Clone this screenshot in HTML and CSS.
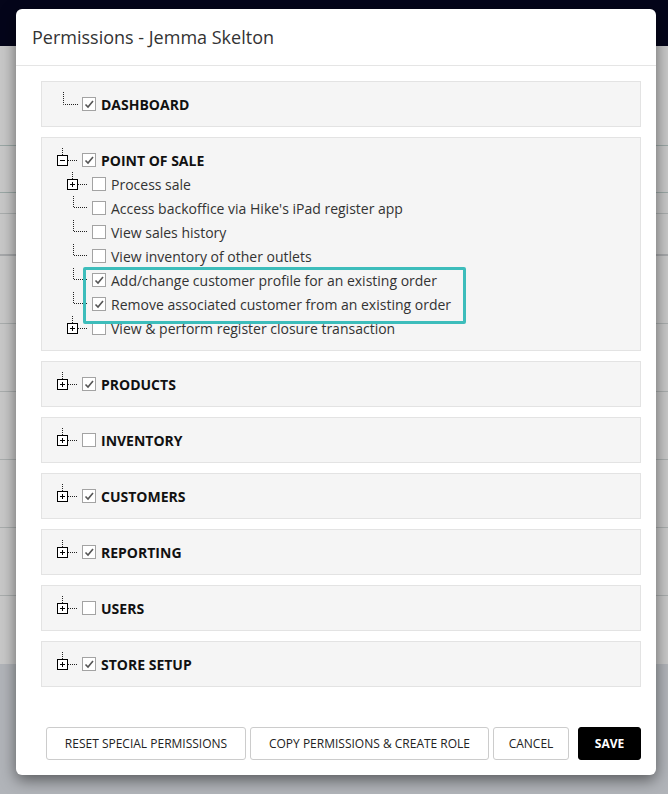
FILE: index.html
```html
<!DOCTYPE html>
<html>
<head>
<meta charset="utf-8">
<link rel="stylesheet" href="styles.css">
</head>
<body>
<div class="page">
  <div class="topbar"></div>
  <div class="bgrow r1"></div>
  <div class="bgrow r2"></div>
  <div class="bgrow r3"></div>
  <div class="bgrow r4"></div>
  <div class="bgrow r5"></div>
  <div class="bgrow r5"></div>
  <div class="bgrow r5"></div>
  <div class="bgrow r5"></div>
  <div class="bgrow r5"></div>
  <div class="bgrow r6"></div>
  <div class="bgfoot"></div>
</div>

<div class="modal">
  <div class="modal-header">Permissions - Jemma Skelton</div>
  <div class="modal-body">
    <div class="card">
      <div class="row top">
        <svg class="conn" width="26" height="24"><path d="M11.5 0V12.5H26" fill="none" stroke="#222" stroke-dasharray="1 1"/></svg>
        <span class="cb checked"><svg width="12" height="12"><path d="M2.5 6.5L5 9L10 3" fill="none" stroke="#555" stroke-width="1.6"/></svg></span>
        <span class="label">DASHBOARD</span>
      </div>
    </div>

    <div class="card">
      <div class="row top">
        <svg class="conn" width="26" height="24"><path d="M10.5 0V7M16 12.5H26" fill="none" stroke="#222" stroke-dasharray="1 1"/><rect x="5.5" y="7.5" width="10" height="10" fill="#fff" stroke="#000"/><path d="M8 12.5H13" stroke="#000"/></svg>
        <span class="cb checked"><svg width="12" height="12"><path d="M2.5 6.5L5 9L10 3" fill="none" stroke="#555" stroke-width="1.6"/></svg></span>
        <span class="label">POINT OF SALE</span>
      </div>
      <div class="children">
        <div class="row">
          <svg class="conn" width="26" height="24"><path d="M10.5 0V7M16 12.5H26" fill="none" stroke="#222" stroke-dasharray="1 1"/><rect x="5.5" y="7.5" width="10" height="10" fill="#fff" stroke="#000"/><path d="M8 12.5H13M10.5 10V15" stroke="#000"/></svg>
          <span class="cb"></span>
          <span class="text">Process sale</span>
        </div>
        <div class="row">
          <svg class="conn" width="26" height="24"><path d="M11.5 0V11.5H26" fill="none" stroke="#222" stroke-dasharray="1 1"/></svg>
          <span class="cb"></span>
          <span class="text">Access backoffice via Hike's iPad register app</span>
        </div>
        <div class="row">
          <svg class="conn" width="26" height="24"><path d="M11.5 0V11.5H26" fill="none" stroke="#222" stroke-dasharray="1 1"/></svg>
          <span class="cb"></span>
          <span class="text">View sales history</span>
        </div>
        <div class="row">
          <svg class="conn" width="26" height="24"><path d="M11.5 0V11.5H26" fill="none" stroke="#222" stroke-dasharray="1 1"/></svg>
          <span class="cb"></span>
          <span class="text">View inventory of other outlets</span>
        </div>
        <div class="highlight">
          <div class="row">
            <svg class="conn" width="26" height="24"><path d="M11.5 0V11.5H26" fill="none" stroke="#222" stroke-dasharray="1 1"/></svg>
            <span class="cb checked"><svg width="12" height="12"><path d="M2.5 6.5L5 9L10 3" fill="none" stroke="#555" stroke-width="1.6"/></svg></span>
            <span class="text">Add/change customer profile for an existing order</span>
          </div>
          <div class="row">
            <svg class="conn" width="26" height="24"><path d="M11.5 0V11.5H26" fill="none" stroke="#222" stroke-dasharray="1 1"/></svg>
            <span class="cb checked"><svg width="12" height="12"><path d="M2.5 6.5L5 9L10 3" fill="none" stroke="#555" stroke-width="1.6"/></svg></span>
            <span class="text">Remove associated customer from an existing order</span>
          </div>
        </div>
        <div class="row">
          <svg class="conn" width="26" height="24"><path d="M10.5 0V7M16 12.5H26" fill="none" stroke="#222" stroke-dasharray="1 1"/><rect x="5.5" y="7.5" width="10" height="10" fill="#fff" stroke="#000"/><path d="M8 12.5H13M10.5 10V15" stroke="#000"/></svg>
          <span class="cb"></span>
          <span class="text">View &amp; perform register closure transaction</span>
        </div>
      </div>
    </div>

    <div class="card">
      <div class="row top">
        <svg class="conn" width="26" height="24"><path d="M10.5 0V7M16 12.5H26" fill="none" stroke="#222" stroke-dasharray="1 1"/><rect x="5.5" y="7.5" width="10" height="10" fill="#fff" stroke="#000"/><path d="M8 12.5H13M10.5 10V15" stroke="#000"/></svg>
        <span class="cb checked"><svg width="12" height="12"><path d="M2.5 6.5L5 9L10 3" fill="none" stroke="#555" stroke-width="1.6"/></svg></span>
        <span class="label">PRODUCTS</span>
      </div>
    </div>

    <div class="card">
      <div class="row top">
        <svg class="conn" width="26" height="24"><path d="M10.5 0V7M16 12.5H26" fill="none" stroke="#222" stroke-dasharray="1 1"/><rect x="5.5" y="7.5" width="10" height="10" fill="#fff" stroke="#000"/><path d="M8 12.5H13M10.5 10V15" stroke="#000"/></svg>
        <span class="cb"></span>
        <span class="label">INVENTORY</span>
      </div>
    </div>

    <div class="card">
      <div class="row top">
        <svg class="conn" width="26" height="24"><path d="M10.5 0V7M16 12.5H26" fill="none" stroke="#222" stroke-dasharray="1 1"/><rect x="5.5" y="7.5" width="10" height="10" fill="#fff" stroke="#000"/><path d="M8 12.5H13M10.5 10V15" stroke="#000"/></svg>
        <span class="cb checked"><svg width="12" height="12"><path d="M2.5 6.5L5 9L10 3" fill="none" stroke="#555" stroke-width="1.6"/></svg></span>
        <span class="label">CUSTOMERS</span>
      </div>
    </div>

    <div class="card">
      <div class="row top">
        <svg class="conn" width="26" height="24"><path d="M10.5 0V7M16 12.5H26" fill="none" stroke="#222" stroke-dasharray="1 1"/><rect x="5.5" y="7.5" width="10" height="10" fill="#fff" stroke="#000"/><path d="M8 12.5H13M10.5 10V15" stroke="#000"/></svg>
        <span class="cb checked"><svg width="12" height="12"><path d="M2.5 6.5L5 9L10 3" fill="none" stroke="#555" stroke-width="1.6"/></svg></span>
        <span class="label">REPORTING</span>
      </div>
    </div>

    <div class="card">
      <div class="row top">
        <svg class="conn" width="26" height="24"><path d="M10.5 0V7M16 12.5H26" fill="none" stroke="#222" stroke-dasharray="1 1"/><rect x="5.5" y="7.5" width="10" height="10" fill="#fff" stroke="#000"/><path d="M8 12.5H13M10.5 10V15" stroke="#000"/></svg>
        <span class="cb"></span>
        <span class="label">USERS</span>
      </div>
    </div>

    <div class="card">
      <div class="row top">
        <svg class="conn" width="26" height="24"><path d="M10.5 0V7M16 12.5H26" fill="none" stroke="#222" stroke-dasharray="1 1"/><rect x="5.5" y="7.5" width="10" height="10" fill="#fff" stroke="#000"/><path d="M8 12.5H13M10.5 10V15" stroke="#000"/></svg>
        <span class="cb checked"><svg width="12" height="12"><path d="M2.5 6.5L5 9L10 3" fill="none" stroke="#555" stroke-width="1.6"/></svg></span>
        <span class="label">STORE SETUP</span>
      </div>
    </div>
  </div>
  <div class="modal-footer">
    <button class="btn btn-reset">RESET SPECIAL PERMISSIONS</button>
    <button class="btn btn-copy">COPY PERMISSIONS &amp; CREATE ROLE</button>
    <button class="btn btn-cancel">CANCEL</button>
    <button class="btn btn-save">SAVE</button>
  </div>
</div>
</body>
</html>
```

FILE: styles.css
```css
* { box-sizing: border-box; }
html, body { margin: 0; padding: 0; }
body {
  width: 668px;
  height: 794px;
  overflow: hidden;
  font-family: "Open Sans", "Noto Sans", sans-serif;
  position: relative;
  background: #b1b4b9;
}
.page { display: flex; flex-direction: column; }
.topbar { height: 46px; background: #04051a; }
.bgrow { background: #c8c8c8; border-bottom: 1px solid #a9adad; }
.r1 { height: 100px; border-bottom-color: #9aa7a5; }
.r2 { height: 47px; border-bottom-color: #9aa7a5; }
.r3 { height: 21px; }
.r4 { height: 42px; border-bottom: 2px solid #a6a8aa; }
.r5 { height: 68px; }
.r6 { height: 68px; border-bottom: none; }
.bgfoot { height: 130px; background: #b1b4b9; }

.modal {
  position: absolute;
  left: 16px;
  top: 9px;
  width: 640px;
  height: 766px;
  background: #fff;
  border-radius: 6px;
  box-shadow: 0 5px 15px rgba(0,0,0,0.5);
  display: flex;
  flex-direction: column;
}
.modal-header {
  height: 57px;
  border-bottom: 1px solid #e5e5e5;
  padding: 0 16px;
  display: flex;
  align-items: center;
  font-size: 18px;
  color: #333;
  padding-bottom: 1px;
}
.modal-body {
  padding: 15px 15px 0 25px;
  display: flex;
  flex-direction: column;
  gap: 10px;
}
.card {
  background: #f5f5f5;
  border: 1px solid #e3e3e3;
  padding: 10px 10px;
}
.row {
  height: 24px;
  display: flex;
  align-items: center;
}
.conn { flex: none; display: block; }
.cb {
  flex: none;
  width: 14px;
  height: 14px;
  border: 1px solid #a3a3a3;
  background: #fff;
  margin-left: 4px;
  margin-right: 5px;
  display: flex;
  align-items: center;
  justify-content: center;
}
.cb svg { display: block; }
.label {
  font-size: 14px;
  font-weight: 700;
  color: #111;
}
.text {
  font-size: 14px;
  color: #333;
}
.children { padding-left: 10px; }
.highlight { position: relative; }
.highlight::after {
  content: "";
  position: absolute;
  left: 21px;
  top: -1px;
  width: 377px;
  height: 51px;
  border: 3px solid #3dbdbb;
  border-radius: 2px;
}
.modal-footer {
  margin-top: auto;
  padding: 0 15px 15px 30px;
  display: flex;
  gap: 4px;
}
.btn {
  height: 33px;
  font-family: "Open Sans", "Noto Sans", sans-serif;
  font-size: 12px;
  color: #222;
  background: #fff;
  border: 1px solid #ccc;
  border-radius: 3px;
  padding: 0;
}
.btn-reset { width: 200px; }
.btn-copy { width: 239px; }
.btn-cancel { width: 76px; }
.btn-save {
  width: 63px;
  margin-left: 5px;
  background: #000;
  border-color: #000;
  color: #fff;
  font-weight: 700;
}
```
